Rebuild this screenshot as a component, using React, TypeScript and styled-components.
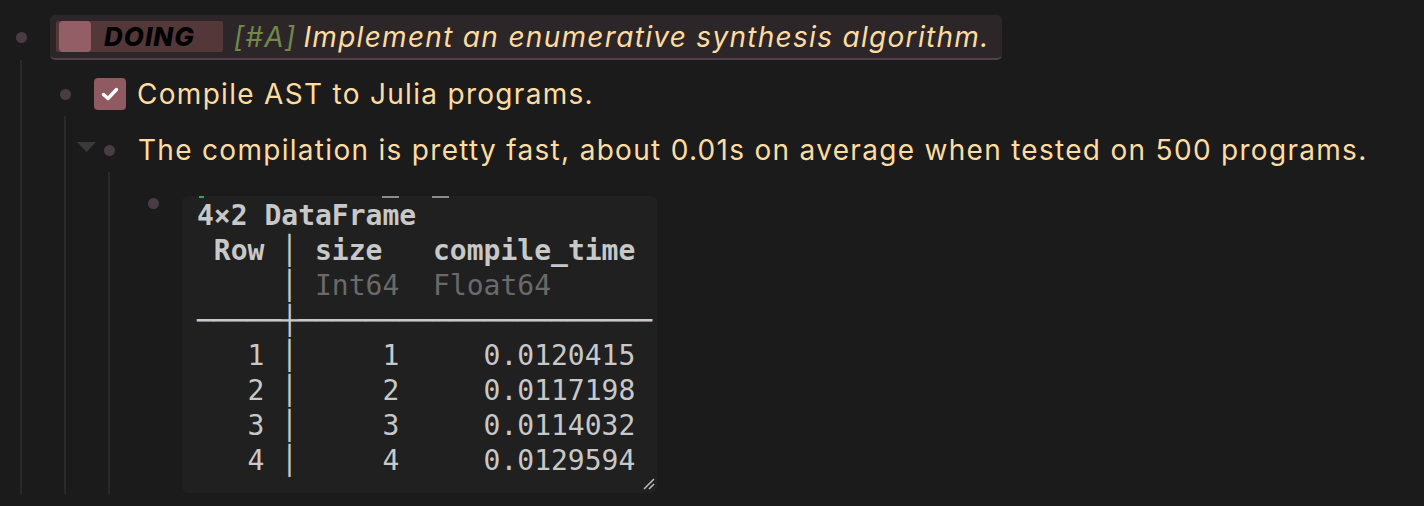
import React from 'react';
import styled, { createGlobalStyle } from 'styled-components';

const GlobalStyle = createGlobalStyle`
  html, body {
    margin: 0;
    padding: 0;
    background: #1b1b1b;
  }
  body {
    font-family: Inter, "Noto Sans", sans-serif;
  }
`;

const Page = styled.div`
  box-sizing: border-box;
  height: 506px;
  overflow: hidden;
  padding: 15px 0 0 6px;
  background: #1b1b1b;
  color: #fddca2;
`;

const Block = styled.div`
  display: flex;
  flex-direction: column;
`;

const Row = styled.div<{ $height: number; $top?: boolean }>`
  position: relative;
  display: flex;
  align-items: ${({ $top }) => ($top ? 'flex-start' : 'center')};
  min-height: ${({ $height }) => $height}px;
`;

const BulletWrap = styled.div<{ $height?: number }>`
  flex: none;
  width: 30px;
  height: ${({ $height }) => ($height ? `${$height}px` : 'auto')};
  margin-right: 14px;
  display: flex;
  align-items: center;
  justify-content: center;
`;

const Dot = styled.span`
  width: 11px;
  height: 11px;
  border-radius: 50%;
  background: #4a3c45;
`;

const Children = styled.div`
  margin-left: 14px;
  border-left: 2px solid #2a2a2a;
  padding: 12px 0 0 28px;
  flex: 1;
`;

const Toggle = styled.svg`
  position: absolute;
  left: -17px;
  top: 14px;
`;

const Heading = styled.div`
  box-sizing: border-box;
  display: flex;
  align-items: center;
  height: 45px;
  padding: 0 12px 0 6px;
  background: #2d2628;
  border-bottom: 2px solid #54404b;
  border-radius: 5px;
  font-style: italic;
  font-size: 28px;
  letter-spacing: 1.3px;
  white-space: nowrap;
`;

const Marker = styled.span`
  display: flex;
  align-items: center;
  height: 31px;
  padding: 0 28px 0 3px;
  margin-right: 11px;
  background: #543739;
  border-radius: 2px;
`;

const MarkerSquare = styled.span`
  width: 32px;
  height: 31px;
  border-radius: 4px;
  background: #935e65;
`;

const MarkerText = styled.span`
  margin-left: 13px;
  font-size: 26px;
  font-weight: 800;
  font-style: italic;
  color: #000;
  letter-spacing: 1px;
`;

const Priority = styled.span`
  color: #72874a;
  margin-right: 7px;
`;

const Checkbox = styled.span`
  flex: none;
  width: 32px;
  height: 32px;
  border-radius: 4px;
  background: #8f5a62;
  display: flex;
  align-items: center;
  justify-content: center;
  margin-right: 11px;
`;

const Text = styled.span`
  font-size: 28px;
  letter-spacing: 1.3px;
  white-space: nowrap;
`;

const Shot = styled.div`
  position: relative;
  box-sizing: border-box;
  width: 475px;
  height: 297px;
  margin-top: 12px;
  padding: 2px 0 0 15px;
  background: #202020;
  border-radius: 6px;
  overflow: hidden;
`;

const Remnant = styled.span<{ $color: string }>`
  position: absolute;
  top: 0;
  height: 2px;
  background: ${({ $color }) => $color};
`;

const Pre = styled.pre`
  margin: 0;
  font-family: "DejaVu Sans Mono", "Liberation Mono", monospace;
  font-size: 28px;
  line-height: 35px;
  color: #c8c8c8;
`;

const B = styled.span`
  font-weight: bold;
`;

const Dim = styled.span`
  color: #6a6a6a;
`;

const Grip = styled.svg`
  position: absolute;
  right: 2px;
  bottom: 3px;
`;

const rows = [
  ['1', '1', '0.0120415'],
  ['2', '2', '0.0117198'],
  ['3', '3', '0.0114032'],
  ['4', '4', '0.0129594'],
];

export default function App() {
  return (
    <>
      <GlobalStyle />
      <Page>
        <Block>
          <Row $height={45}>
            <BulletWrap>
              <Dot />
            </BulletWrap>
            <Heading>
              <Marker>
                <MarkerSquare />
                <MarkerText>DOING</MarkerText>
              </Marker>
              <Priority>[#A]</Priority>
              Implement an enumerative synthesis algorithm.
            </Heading>
          </Row>
          <Children>
            <Block>
              <Row $height={44}>
                <BulletWrap>
                  <Dot />
                </BulletWrap>
                <Checkbox>
                  <svg width="18" height="14" viewBox="0 0 18 14">
                    <path d="M2.5 7.5 L7 11.5 L15.5 2.5" fill="none" stroke="#fff" strokeWidth="3.4" strokeLinecap="round" strokeLinejoin="round" />
                  </svg>
                </Checkbox>
                <Text>Compile AST to Julia programs.</Text>
              </Row>
              <Children>
                <Block>
                  <Row $height={44}>
                    <Toggle width="19" height="10" viewBox="0 0 19 10">
                      <polygon points="0,0 19,0 9.5,10" fill="#3a3a3a" />
                    </Toggle>
                    <BulletWrap>
                      <Dot />
                    </BulletWrap>
                    <Text>
                      The compilation is pretty fast, about 0.01s on average when tested on 500 programs.
                    </Text>
                  </Row>
                  <Children>
                    <Row $height={310} $top>
                      <BulletWrap $height={38}>
                        <Dot />
                      </BulletWrap>
                      <Shot>
                        <Remnant $color="#1fae6a" style={{ left: 17, width: 5 }} />
                        <Remnant $color="#8c8c8c" style={{ left: 200, width: 17 }} />
                        <Remnant $color="#8c8c8c" style={{ left: 250, width: 17 }} />
                        <Pre>
                          <B>4×2 DataFrame</B>
                          {'\n'}
                          <B>{' Row '}</B>│<B>{' size   compile_time'}</B>
                          {'\n'}
                          {'     │ '}
                          <Dim>{'Int64  Float64'}</Dim>
                          {'\n'}
                          {'─────┼─────────────────────'}
                          {rows.map(([r, s, t]) => (
                            <React.Fragment key={r}>
                              {'\n'}
                              {`   ${r} │     ${s}     ${t}`}
                            </React.Fragment>
                          ))}
                        </Pre>
                        <Grip width="12" height="12" viewBox="0 0 12 12">
                          <path d="M1 11 L11 1 M6 11 L11 6" stroke="#bdbdbd" strokeWidth="1.5" />
                        </Grip>
                      </Shot>
                    </Row>
                  </Children>
                </Block>
              </Children>
            </Block>
          </Children>
        </Block>
      </Page>
    </>
  );
}
